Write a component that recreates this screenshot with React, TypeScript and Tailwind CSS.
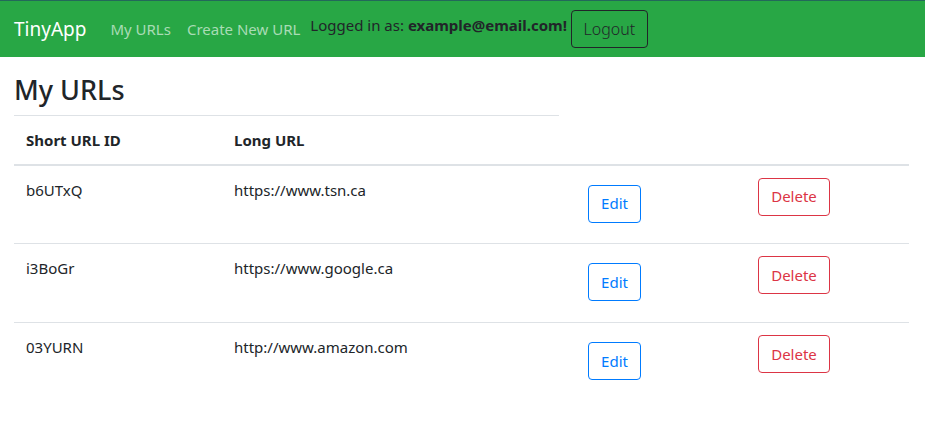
const urls = [
  { id: "b6UTxQ", longURL: "https://www.tsn.ca" },
  { id: "i3BoGr", longURL: "https://www.google.ca" },
  { id: "03YURN", longURL: "http://www.amazon.com" },
];

function Navbar() {
  return (
    <nav className="flex h-[57px] items-center border-t border-[#23695a] bg-[#28a745] pl-[14px]">
      <a href="#" className="text-[19px] text-white">
        TinyApp
      </a>
      <div className="ml-[24px] flex gap-[16px] text-[15px] text-[#a9dcb5]">
        <a href="#">My URLs</a>
        <a href="#">Create New URL</a>
      </div>
      <span className="mb-[8px] ml-[10px] text-[15px] text-[#212529]">
        Logged in as: <b>example@email.com!</b>
      </span>
      <button className="ml-[4px] h-[38px] w-[77px] rounded-[4px] border border-[#212529] text-[16px] font-light text-[#212529]">
        Logout
      </button>
    </nav>
  );
}

export default function App() {
  return (
    <div className="min-h-[438px] bg-white font-['Noto_Sans',sans-serif] text-[#212529]">
      <Navbar />
      <main className="px-[14px]">
        <h3 className="pt-[16px] pb-[8px] text-[27px] leading-[34px] font-medium">My URLs</h3>
        <table className="w-[895px] border-collapse text-left text-[15px]">
          <thead>
            <tr className="h-[49px]">
              <th className="w-[208px] border-t border-b-2 border-[#dee2e6] px-[12px] font-bold">Short URL ID</th>
              <th className="w-[337px] border-t border-b-2 border-[#dee2e6] px-[12px] font-bold">Long URL</th>
              <th className="w-[187px] border-b-2 border-[#dee2e6]"></th>
              <th className="border-b-2 border-[#dee2e6]"></th>
            </tr>
          </thead>
          <tbody>
            {urls.map((url) => (
              <tr key={url.id} className="h-[79px] border-b border-[#dee2e6] align-top last:border-b-0">
                <td className="px-[12px] pt-[13px]">{url.id}</td>
                <td className="px-[12px] pt-[13px]">{url.longURL}</td>
                <td className="pl-[29px] pt-[19px]">
                  <button className="h-[38px] w-[53px] rounded-[4px] border border-[#007bff] text-[15px] text-[#007bff]">
                    Edit
                  </button>
                </td>
                <td className="px-[12px] pt-[12px]">
                  <button className="h-[38px] w-[72px] rounded-[4px] border border-[#dc3545] text-[15px] text-[#dc3545]">
                    Delete
                  </button>
                </td>
              </tr>
            ))}
          </tbody>
        </table>
      </main>
    </div>
  );
}
